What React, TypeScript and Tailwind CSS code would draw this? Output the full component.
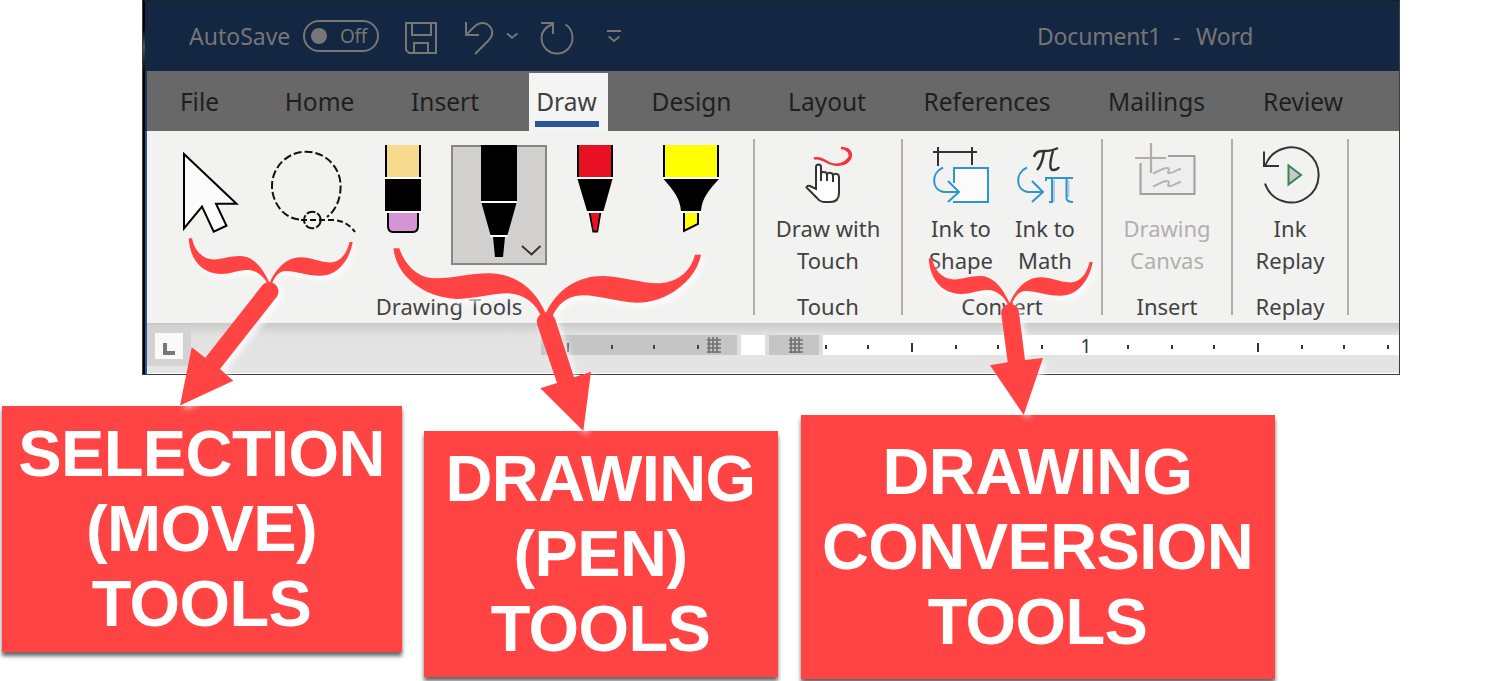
import type { ReactNode } from "react";

const TABS: { name: string; box: string }[] = [
  { name: "File", box: "ml-[34px] w-[37px]" },
  { name: "Home", box: "ml-[67px] w-[69px]" },
  { name: "Insert", box: "ml-[59px] w-[64px]" },
  { name: "Draw", box: "ml-[52px] w-[79px]" },
  { name: "Design", box: "ml-[44px] w-[79px]" },
  { name: "Layout", box: "ml-[58px] w-[76px]" },
  { name: "References", box: "ml-[58px] w-[128px]" },
  { name: "Mailings", box: "ml-[57px] w-[97px]" },
  { name: "Review", box: "ml-[58px] w-[80px]" },
];

function TitleBar() {
  return (
    <header className="flex h-[70px] shrink-0 items-center bg-[#132642] pl-[42px] text-[#777674]">
      <span className="-mt-px w-[100px] whitespace-nowrap text-center text-[23px] leading-8">AutoSave</span>
      <div className="ml-[14px] flex h-[32px] w-[76px] items-center rounded-full border-2 border-[#777674] pl-[6px]">
        <span className="size-[16px] rounded-full bg-[#777674]" />
        <span className="ml-[13px] text-[19px] leading-6 tracking-[-0.3px]">Off</span>
      </div>
      <svg className="ml-[24px] mt-[2px]" width="222" height="40" viewBox="403 18 222 40" fill="none" stroke="currentColor" strokeWidth="2">
        <path d="M406 24H436V54H409L406 51Z M412 24V36H431V24 M414 54V44H428V54" />
        <path d="M466 23V36H479 M466 36L474 28C480 22 487 23 491 29C494 34 491 39 488 42L475 55" />
        <path d="M507 34.5L512 38.7L517.5 34.5" />
        <path d="M541 24H553V35 M553 25C545 28 541.500 33 541.500 39A15.500 15.500 0 0 0 572.500 39C572.500 33 570 28 565.500 25.500" />
        <path d="M607 32H621 M608.700 37.500L614 42L619.500 37.500" />
      </svg>
      <div className="ml-[412px] flex whitespace-nowrap text-[23px] leading-8 tracking-[-0.2px]">
        <span className="w-[125px]">Document1</span>
        <span className="ml-[11px] w-[23px]">-</span>
        <span>Word</span>
      </div>
    </header>
  );
}

function TabBar() {
  return (
    <nav className="flex h-[60px] shrink-0 bg-[#686868] text-[24.5px] leading-[34px] text-[#1f1f1f]">
      {TABS.map((t) =>
        t.name === "Draw" ? (
          <div key={t.name} className={`${t.box} mt-[2px] flex shrink-0 flex-col bg-[#f4f4f3] pt-[12px] text-[#3f3f3f]`}>
            <span className="w-[75px] text-center">{t.name}</span>
            <span className="ml-[6px] mt-[2px] h-[6px] w-[64px] bg-[#2b579a]" />
          </div>
        ) : (
          <div key={t.name} className={`${t.box} flex shrink-0 justify-center whitespace-nowrap pt-[14px]`}>
            {t.name}
          </div>
        ),
      )}
    </nav>
  );
}

function DrawingTools() {
  return (
    <section className="flex w-[606px] shrink-0 flex-col pt-[14px]">
      <div className="flex pl-[28px]">
        <svg width="72" height="120" viewBox="175 145 72 120">
          <path d="M184 154L236.500 203.700H216L226.500 225.700L213.700 231.700L202 206.500L184 228.500Z" fill="#fcfcfd" stroke="#000" strokeWidth="2" />
        </svg>
        <svg className="ml-[18px]" width="96" height="120" viewBox="265 145 96 120" fill="none" stroke="#111" strokeWidth="2">
          <path d="M299 219.500C283 218 272 202 272 186A34.300 34.300 0 0 1 340.600 186C340.600 199 336 210 327 217" strokeDasharray="8 3" />
          <path d="M301 220H334C344 221 350 225 355 232" strokeDasharray="6 3" />
          <circle cx="312.300" cy="220" r="8.300" strokeDasharray="9 2" />
        </svg>
        <svg className="ml-[19px]" width="48" height="120" viewBox="380 145 48 120">
          <path d="M385 145H421V177H385Z" fill="#000" />
          <path d="M387 145H419V177H387Z" fill="#f7da8e" />
          <path d="M385 177H421V213H385Z" fill="#fff" />
          <path d="M385 179H421V211H385Z" fill="#000" />
          <path d="M388 213V226Q388 232 393 232H413Q418 232 418 226V213" fill="#d694d6" stroke="#000" strokeWidth="2" />
        </svg>
        <div className="ml-[23px] h-[120px] w-[96px] border-2 border-[#858784] bg-[#d1d0cf]">
          <svg className="-mt-[2px]" width="92" height="118" viewBox="453 145 92 118">
            <path d="M481 145H517V201H481Z" />
            <path d="M481 201H517V203H481Z M490 235H507.500V237H490Z" fill="#fff" />
            <path d="M481.500 203H516.500L507.500 235H490.500Z M493 237H505L503 257H495Z" />
            <path d="M522 246L531.500 254.500L540.500 246" fill="none" stroke="#333" strokeWidth="2" />
          </svg>
        </div>
        <svg className="ml-[28px]" width="40" height="120" viewBox="575 145 40 120">
          <path d="M577 145H613V177H577Z" />
          <path d="M579 145H611V177H579Z" fill="#e81123" />
          <path d="M577 177H613V179H577Z M587 211H604V213H587Z" fill="#fff" />
          <path d="M577.500 179H612.500L603.500 211H587Z M588.700 213H601.300L598 232.500H592.500Z" />
          <path d="M590.700 213H599.300L597 230.500H593.500Z" fill="#e81123" />
        </svg>
        <svg className="ml-[45px]" width="62" height="120" viewBox="660 145 62 120">
          <path d="M663 145H719V177H663Z" />
          <path d="M665 145H717V177H665Z" fill="#ff0" />
          <path d="M663 177H719V179H663Z M681 211H701V213H681Z" fill="#fff" />
          <path d="M663.500 179H719C709 190 702 198 701 211H681C680 198 673 190 663.500 179Z" />
          <path d="M684 213V231L698 224V213" fill="#ff0" stroke="#000" strokeWidth="2" />
        </svg>
      </div>
      <span className="mt-[25px] text-center">
        <span className="pr-[2px]">Drawing Tools</span>
      </span>
    </section>
  );
}

function Divider() {
  return <div className="mt-[8px] h-[176px] w-[2px] shrink-0 bg-[#b3aeac]" />;
}

function Group({ label, box, children }: { label: string; box: string; children: ReactNode }) {
  return (
    <section className={`${box} flex shrink-0 flex-col pt-[14px] text-center`}>
      <div className="flex justify-center">{children}</div>
      <span className="mt-[14px]">{label}</span>
    </section>
  );
}

function Tool({ lines, box, children }: { lines: [string, string]; box: string; children: ReactNode }) {
  return (
    <div className={`${box} flex flex-col items-center whitespace-nowrap`}>
      {children}
      <span className="mt-[7px]">{lines[0]}</span>
      <span>{lines[1]}</span>
    </div>
  );
}

function Ribbon() {
  return (
    <div className="flex h-[192px] shrink-0 bg-[#f2f2f1] text-[22px] leading-8 text-[#424242]">
      <DrawingTools />
      <Divider />
      <Group label="Touch" box="w-[146px]">
        <Tool lines={["Draw with", "Touch"]} box="w-[146px]">
          <svg width="60" height="60" viewBox="799 145 60 60" fill="none">
            <path d="M815 158.500C820 157 825 160 830 163C839 167 852 163 851.500 155C851.300 151 847 148 842 148" stroke="#f4343a" strokeWidth="2.400" />
            <path d="M843 164C848 162 851 159 851.500 155Q851 151 847 149" stroke="#f4343a" strokeWidth="3.400" />
            <path d="M817 189V167Q817 164.500 819.500 164.500Q822 164.500 822 167V181V174Q822.500 171.500 825 172Q828 172 828 175V181V175Q829 172 831.500 173Q834 173 834 176V182V176Q835 173 837.500 174Q840 174 840 178V193Q840 202 831 202H826Q821 202 818 198L807.500 187.500Q808 185 811 186Z" fill="#fff" stroke="#333" strokeWidth="2" />
          </svg>
        </Tool>
      </Group>
      <Divider />
      <Group label="Convert" box="w-[198px]">
        <Tool lines={["Ink to", "Shape"]} box="w-[84px] pl-[2px]">
          <svg width="60" height="60" viewBox="931 145 60 60" fill="none" strokeWidth="2">
            <path d="M933 152H977M938 147V166M972 147V165" stroke="#333" />
            <path d="M954 168H988V202H954Z" fill="#fbfbfc" />
            <path d="M954 183V168H988V202H953" stroke="#2e95d3" />
            <path d="M943 167.500C931 173 931 190 944 192H958M948 181L959 192L948 202" stroke="#2e95d3" />
          </svg>
        </Tool>
        <Tool lines={["Ink to", "Math"]} box="w-[84px] pl-[2px]">
          <svg width="60" height="60" viewBox="1015 145 60 60" fill="none">
            <path d="M1034 157C1036 151 1040 151 1044 151C1050 151 1054 150 1058 148" stroke="#333" strokeWidth="2.500" />
            <path d="M1044 151C1043 159 1041 166 1037 170M1053 151C1050 161 1049 170 1053 170C1056 170 1058 169 1059 167" stroke="#333" strokeWidth="2.400" />
            <path d="M1027 167.500C1015 173 1015 190 1028 192H1042M1032 181L1043 192L1032 202" stroke="#2e95d3" strokeWidth="2" />
            <path d="M1054 180V202M1068.500 180V197" stroke="#b8cbd8" strokeWidth="2" />
            <path d="M1046 181V178H1073M1052 178V202M1049 202H1053M1066.500 178V198Q1066.500 202 1073 202" stroke="#2e95d3" strokeWidth="2" />
          </svg>
        </Tool>
      </Group>
      <Divider />
      <Group label="Insert" box="w-[128px]">
        <Tool lines={["Drawing", "Canvas"]} box="w-[128px] text-[#b1afae]">
          <svg className="-mt-[2px]" width="66" height="62" viewBox="1134 143 66 62" fill="none" strokeWidth="2">
            <path d="M1141 156H1194V194H1141Z" fill="#eeeeef" />
            <path d="M1140.500 163V194H1194.500V156H1168" stroke="#a09e9e" />
            <path d="M1151 143V173M1135 158H1166" stroke="#b4abab" strokeWidth="2.200" />
            <path d="M1153 173.500C1158 172 1162 168 1167 168C1172 168 1165 174 1170 173C1174 173 1177 169 1181 169M1153 186.500C1158 185 1162 181 1167 181C1172 181 1165 187 1170 186C1174 186 1177 182 1181 182" stroke="#b4b2b2" />
          </svg>
        </Tool>
      </Group>
      <Divider />
      <Group label="Replay" box="w-[114px]">
        <Tool lines={["Ink", "Replay"]} box="w-[114px]">
          <svg width="60" height="60" viewBox="1260 145 60 60" fill="none" stroke="#333" strokeWidth="2">
            <path d="M1265 183.500A27.500 27.500 0 1 0 1265.500 165" />
            <path d="M1264 151.500V166H1279" />
            <path d="M1288.500 165.500V184.500L1301 175Z" fill="#c9c9c9" stroke="#36874d" />
          </svg>
        </Tool>
      </Group>
      <Divider />
    </div>
  );
}

function Hatch({ className }: { className: string }) {
  return (
    <svg className={className} width="16" height="16" viewBox="0 0 16 16" fill="none" stroke="#6f6f6f" strokeWidth="1.600">
      <path d="M3 0V16M7 0V16M11 0V16M1 3H15M1 7H15M1 11H15M1 15H15" />
    </svg>
  );
}

function Ruler() {
  return (
    <div className="flex h-[50px] shrink-0 bg-linear-to-b from-[#c9c9c9] via-[#e2e2e2] via-25% to-[#e5e5e5]">
      <div className="mt-[2px] flex h-[41px] w-[44px] shrink-0 items-center justify-center bg-[#d3d3d3]">
        <div className="mr-px mt-[1px] flex h-[26px] w-[28px] items-center justify-center bg-[#fbfafb]">
          <span className="mt-[6px] size-[12px] border-b-[4px] border-l-[4px] border-[#777]" />
        </div>
      </div>
      <div className="ml-[350px] mt-[12px] flex h-[20px] w-[196px] shrink-0 items-center bg-[#c5c5c5]">
        <svg width="165" height="20" viewBox="541 335 165 20" fill="#444">
          <path d="M567 343H569V352H567Z M611 345H613V349H611Z M653 345H655V349H653Z M697 345H699V349H697Z" />
        </svg>
        <Hatch className="" />
      </div>
      <div className="mt-[12px] h-[20px] w-[4px] shrink-0 bg-[#dedede]" />
      <div className="mt-[12px] h-[20px] w-[24px] shrink-0 bg-white" />
      <div className="mt-[12px] h-[20px] w-[4px] shrink-0 bg-[#dedede]" />
      <div className="mt-[12px] flex h-[20px] w-[50px] shrink-0 items-center bg-[#c5c5c5]">
        <Hatch className="ml-[19px]" />
      </div>
      <div className="mt-[12px] h-[20px] w-[4px] shrink-0 bg-[#dedede]" />
      <div className="mt-[12px] flex h-[20px] flex-1 items-center bg-white">
        <svg width="252" height="20" viewBox="823 335 252 20" fill="#333">
          <path d="M825 345H827V349H825Z M867 345H869V349H867Z M911 343H913V352H911Z M955 345H957V349H955Z M997 345H999V349H997Z M1041 345H1043V349H1041Z" />
        </svg>
        <span className="w-[22px] pt-[2px] text-center text-[19px] leading-5 text-[#333]">1</span>
        <svg width="302" height="20" viewBox="1097 335 302 20" fill="#333">
          <path d="M1127 345H1129V349H1127Z M1171 345H1173V349H1171Z M1213 345H1215V349H1213Z M1257 343H1259V352H1257Z M1301 345H1303V349H1301Z M1343 345H1345V349H1343Z M1387 345H1389V349H1387Z" />
        </svg>
      </div>
    </div>
  );
}

function WordWindow() {
  return (
    <div className="ml-[142px] flex h-[375px] w-[1258px] overflow-hidden border border-[#3d3d3d] border-t-[#202020]">
      <div className="w-[2px] shrink-0 bg-linear-to-b from-black from-6% via-[#555] via-12% to-black to-22%" />
      <div className="flex w-[2px] shrink-0 flex-col">
        <div className="h-[70px] bg-[#132642]" />
        <div className="h-[60px] bg-[#1b3358]" />
        <div className="flex-1 bg-[#2b579a]" />
      </div>
      <div className="flex w-[1252px] flex-col bg-white">
        <TitleBar />
        <TabBar />
        <Ribbon />
        <Ruler />
      </div>
    </div>
  );
}

const SMALL_BRACE =
  "M188.700 238.300H192C194 249 201 259 214 259.500C224 259 231 255.500 241 256C255 257 263 269 269.700 283C275 270 286 257.500 300 257.300C311 257 318 262 330 262.500C341 262 347 253 349.500 242H352.700C350 258 339 276 320 275.800C306 275.500 296 271 286 271C278 271 274 278 271.500 285H268C265 278 258 270 247 270C238 270 231 274 221 274C202 273.500 190 260 188.700 238.300Z";

function Pointers() {
  return (
    <svg
      className="pointer-events-none absolute left-0 top-0 drop-shadow-[4px_4px_3px_rgba(255,255,255,0.8)]"
      width="1485"
      height="440"
      viewBox="0 0 1485 440"
      fill="#ff4443"
    >
      <path d={SMALL_BRACE} />
      <path d={SMALL_BRACE} transform="translate(740 20)" />
      <path d="M393.500 248.300H399.300C404 262 415 277 433 278.300C452 279 470 273 490 273.300C515 274 535 288 545.700 313.500C557 289 578 276 603 276C625 277 641 283 657 283.300C676 283 690 273 695 254.700H701C696 281 666 303 637 302.700C617 302 600 295.500 583 295.300C567 295.500 557 305 551.700 318H541.700C536 303 524 294 508 293.300C490 293.500 474 299 456 299C422 297 396 275 393.500 248.300Z" />
      <path d="M205.300 357.700L262.500 285A9.300 9.300 0 0 1 277 296.500L220 369L233.300 380.700L180 405.500L191.700 347.300Z" />
      <path d="M557 383L537.300 325A9.200 9.200 0 0 1 555 318.500L574 377.300L591 371.700L583.300 431L540.300 388.300Z" />
      <path d="M1007.700 362.300L1001.200 313.500A8.900 8.900 0 0 1 1018.800 311L1025 360L1043 358L1023.700 415L990 365.300Z" />
    </svg>
  );
}

function Callout({ lines, box }: { lines: string[]; box: string }) {
  return (
    <div
      className={`${box} flex shrink-0 flex-col items-center whitespace-nowrap bg-[#ff4443] font-['Liberation_Sans',Arial,sans-serif] text-[65px] font-bold leading-[75px] tracking-[-0.6px] text-white shadow-[0_4px_4px_rgba(0,0,0,0.6)]`}
    >
      {lines.map((l) => (
        <span key={l} className="pr-px">
          {l}
        </span>
      ))}
    </div>
  );
}

export default function App() {
  return (
    <main className="relative h-[681px] w-[1485px] overflow-hidden bg-white font-['Noto_Sans','Open_Sans',sans-serif]">
      <WordWindow />
      <Pointers />
      <div className="flex items-start pl-[2px]">
        <Callout lines={["SELECTION", "(MOVE)", "TOOLS"]} box="mt-[31px] h-[246px] w-[400px] pt-[10px]" />
        <Callout lines={["DRAWING", "(PEN)", "TOOLS"]} box="ml-[22px] mt-[56px] h-[246px] w-[354px] pt-[10px]" />
        <Callout lines={["DRAWING", "CONVERSION", "TOOLS"]} box="ml-[23px] mt-[40px] h-[264px] w-[474px] pt-[19px]" />
      </div>
    </main>
  );
}
